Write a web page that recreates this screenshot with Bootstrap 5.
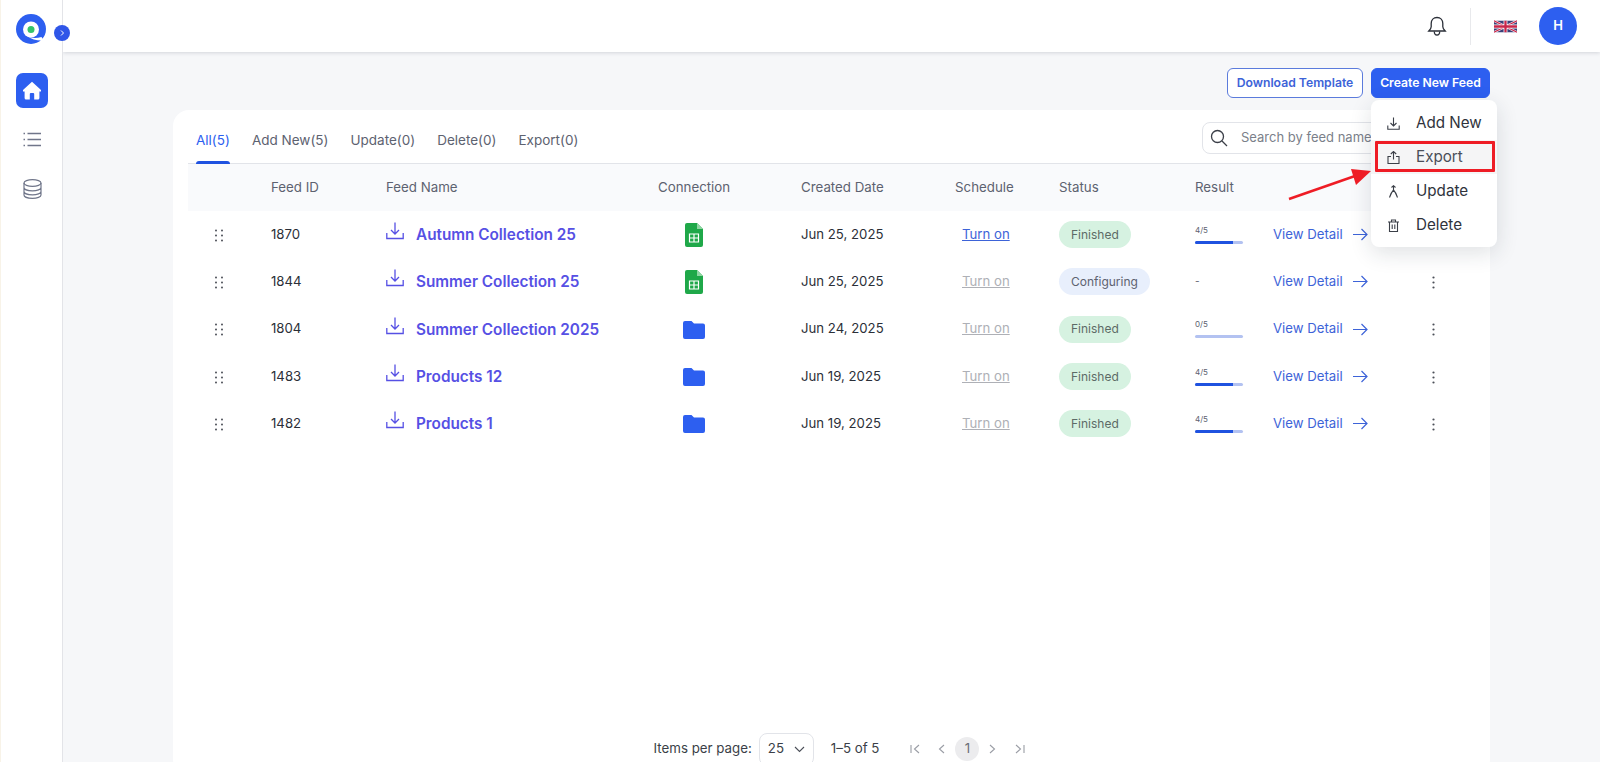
<!DOCTYPE html>
<html lang="en">
<head>
<meta charset="utf-8">
<title>Feeds</title>
<link rel="stylesheet" href="https://cdn.jsdelivr.net/npm/bootstrap@5.3.0/dist/css/bootstrap.min.css">
<style>
html,body{height:100%}
body{font-family:Inter,"Liberation Sans",sans-serif;font-size:13px;color:#2b2f38;background:#f6f7f9;overflow:hidden}
.shell{height:100vh}
.side{width:63px;flex:none;background:#fff;border-right:1px solid #e3e4e8;border-left:1px solid #f8f3e8;position:relative;z-index:5;padding-left:15px}
.logo-wrap{height:30px;margin-top:14px}
.toggle{position:absolute;left:53px;top:25px;width:16px;height:16px;border-radius:50%;background:#2f56e8;display:flex;align-items:center;justify-content:center}
.home-btn{width:32px;height:35px;border-radius:7px;background:#2d5ff0;margin-top:29px;display:flex;align-items:center;justify-content:center}
.side-ic{width:32px;display:flex;justify-content:center}
.side-list{margin-top:24px}
.side-db{margin-top:32px}
.topbar{height:52px;flex:none;background:#fff;box-shadow:0 1px 4px rgba(30,40,60,.16);position:relative;z-index:2}
.top-div{width:1px;height:37px;background:#e8e9ec;margin:0 23px 0 23px}
.ava{width:38px;height:38px;border-radius:50%;background:#2d5ff0;color:#fff;font-weight:600;font-size:13px;display:flex;align-items:center;justify-content:center;margin:0 23px 0 22px}
.content{min-height:0;padding:16px 110px 0 110px;position:relative}
.act-btn{font-size:12.2px;font-weight:600;height:30px;padding:0;border-radius:6px;display:flex;align-items:center;white-space:nowrap}
.btn-tpl{color:#3d63d8;border:1px solid #5b7bdc;background:#fff;width:136px;justify-content:center}
.btn-new{color:#fff;background:#2d5ff0;border:1px solid #2d5ff0;width:119px;justify-content:center}
.panel{background:#fff;border-radius:16px;margin-top:12px;flex:1;min-height:0;padding:0 15px;margin-bottom:-13px}
.tabbar{height:54px;border-bottom:1px solid #e2e4e9;position:relative;flex:none}
.tabitem{color:#5d6270;font-size:13.5px;padding-top:20px;height:54px;white-space:nowrap}
.tabitem.on{color:#2d5ff0;position:relative;margin-left:8px}
.tabitem.on::after{content:"";position:absolute;left:0;right:0;bottom:0;height:3px;background:#1f52e0;border-radius:3px 3px 0 0}
.tab-gap{margin-left:22px}
.searchbox{position:absolute;left:1014px;top:12px;width:285px;height:32px;border:1px solid #e2e4e9;border-radius:8px;display:flex;align-items:center;padding-left:7px;color:#7b7f8a;font-size:13px;gap:13px}
.feed-tbl{table-layout:fixed;width:100%;margin:0;--bs-table-bg:transparent}
.feed-tbl th{background:#f9fafc;color:#5d6270;font-weight:400;font-size:13.3px;height:47px;padding:0;border:0;vertical-align:middle}
.feed-tbl td{height:47.3px;padding:0;border:0;vertical-align:middle;font-size:13.2px;color:#2b2f38}
.c1{width:83px}.c2{width:115px}.c3{width:272px}.c4{width:143px}.c5{width:154px}.c6{width:104px}.c7{width:136px}.c8{width:77px}.c9{width:160px}
.feed-tbl td.dots{padding-left:27px}
.feed-link{color:#5650e4;font-weight:600;font-size:15.3px;text-decoration:none;display:flex;align-items:center;gap:12px;white-space:nowrap;padding-top:2px}
.feed-link svg{margin-top:-9px}
.feed-tbl td.conn{padding-left:27px}
.feed-tbl td.conn-f{padding-left:25px}
.feed-tbl td.sched{padding-left:7px}
.sched a{color:#3d63d8;text-decoration:underline}
.sched a.off{color:#aeb0b6}
.st-pill{font-size:12px;font-weight:400;padding:0 12px;height:27px;display:inline-flex;align-items:center;border-radius:14px;color:#5d6b66}
.st-done{background:#d6f2e1}
.st-conf{background:#e8effc;color:#5d6270}
.res-num{font-size:8px;line-height:9px;color:#5d6270;margin-bottom:6px}
.res-none{font-size:10px;line-height:9px;color:#5d6270}
.res-bar{width:48px;height:3px;background:#b3c2f1;border-radius:2px;--bs-progress-bar-bg:#1f52e0}
.view-l{color:#3d63d8;text-decoration:none;display:flex;align-items:center;gap:10px;white-space:nowrap;padding-left:1px}
.pager{height:52px;flex:none;color:#3b3f48;font-size:13.3px;gap:7px;margin-top:auto;padding-left:24px}
.per{width:55px;height:33px;border:1px solid #e2e4e9;border-radius:8px;display:flex;align-items:center;justify-content:space-between;padding:0 8px;margin-right:10px}
.pg-range{margin-right:15px}
.pg-ic{width:27px;display:flex;justify-content:center}
.pg-cur{width:24px;height:24px;border-radius:50%;background:#ececee;display:flex;align-items:center;justify-content:center;color:#6b6f78}
.menu-pop{position:absolute;display:block;left:1308px;top:48px;width:126px;height:147px;border:0;border-radius:8px;box-shadow:0 6px 22px rgba(30,40,60,.14);padding:6px 0;min-width:0;background:#fff;z-index:3}
.menu-pop .dropdown-item{display:flex;align-items:center;height:34px;padding:0 0 0 16px;font-size:15.2px;color:#2f333c;gap:16px}
.menu-pop .m-on{background:#f5f5f6;color:#4a4e58}
.mark-box{position:absolute;left:1312px;top:89px;width:120px;height:31px;border:3px solid #ee1c25;border-radius:1px;z-index:4}
.mark-arrow{position:absolute;left:1224px;top:113px;z-index:4}
</style>
</head>
<body>
<div class="shell d-flex">
  <aside class="side">
    <div class="logo-wrap">
      <svg width="30" height="30" viewBox="0 0 30 30"><circle cx="15" cy="15" r="15" fill="#2d5ff0"/><circle cx="15" cy="15.500" r="8" fill="#fff"/><path d="M11 21.500C15 24.500 20 24.500 25.500 23L27.500 26.500C22 27 16 26 11 21.500z" fill="#fff"/><circle cx="15" cy="15.500" r="3.500" fill="#34c46a"/></svg>
    </div>
    <div class="toggle"><svg width="8" height="8" viewBox="0 0 8 8"><path d="M3 1.500 5.500 4 3 6.500" fill="none" stroke="#fff" stroke-width="1"/></svg></div>
    <div class="home-btn"><svg width="20" height="19" viewBox="0 0 20 19"><path d="M10 .8 19 9v1.500h-1.600V17a1.500 1.500 0 0 1-1.500 1.500h-3.700V13a1 1 0 0 0-1-1H8.800a1 1 0 0 0-1 1v5.500H4.100A1.500 1.500 0 0 1 2.600 17v-6.500H1V9z" fill="#fff"/></svg></div>
    <div class="side-ic side-list"><svg width="19" height="15" viewBox="0 0 19 15" fill="none" stroke="#70768a" stroke-width="1.300"><path d="M4.500 1.500H18M4.500 7.500H18M4.500 13.500H18"/><path d="M.5 1.500h1.500M.5 7.500h1.500M.5 13.500h1.500" stroke-width="1.600"/></svg></div>
    <div class="side-ic side-db"><svg width="19" height="20" viewBox="0 0 19 20" fill="none" stroke="#70768a" stroke-width="1.200"><ellipse cx="9.500" cy="4" rx="8.500" ry="3.300"/><path d="M1 4v12c0 1.900 3.800 3.300 8.500 3.300S18 17.900 18 16V4M1 8.500c0 1.900 3.800 3.300 8.500 3.300S18 10.400 18 8.500M1 12.500c0 1.900 3.800 3.300 8.500 3.300s8.500-1.400 8.500-3.300"/></svg></div>
  </aside>
  <div class="flex-grow-1 d-flex flex-column" style="min-width:0">
    <header class="topbar d-flex align-items-center justify-content-end">
      <svg width="20" height="21" viewBox="0 0 20 21" fill="none" stroke="#2b2f38" stroke-width="1.300"><path d="M10 1.500c-3.500 0-5.800 2.600-5.800 6v3.200c0 1.500-1.200 3-2.400 4.300h16.400c-1.200-1.300-2.400-2.800-2.400-4.300V7.500c0-3.400-2.300-6-5.800-6z"/><path d="M7.300 15.500c0 2 1.200 3.500 2.700 3.500s2.700-1.500 2.700-3.500"/></svg>
      <div class="top-div"></div>
      <svg width="23" height="13" viewBox="0 0 60 30"><rect width="60" height="30" fill="#3a3f78"/><path d="M0 0l60 30M60 0L0 30" stroke="#fff" stroke-width="6"/><path d="M0 0l60 30M60 0L0 30" stroke="#c8264a" stroke-width="3"/><path d="M30 0v30M0 15h60" stroke="#fff" stroke-width="10"/><path d="M30 0v30M0 15h60" stroke="#c8264a" stroke-width="6"/></svg>
      <div class="ava">H</div>
    </header>
    <main class="content flex-grow-1 d-flex flex-column">
      <div class="d-flex justify-content-end gap-2">
        <button class="btn act-btn btn-tpl" type="button">Download Template</button>
        <button class="btn act-btn btn-new" type="button">Create New Feed</button>
      </div>
      <section class="panel d-flex flex-column">
        <div class="tabbar d-flex">
          <div class="tabitem on">All(5)</div>
          <div class="tabitem tab-gap">Add New(5)</div>
          <div class="tabitem tab-gap">Update(0)</div>
          <div class="tabitem tab-gap">Delete(0)</div>
          <div class="tabitem tab-gap">Export(0)</div>
          <div class="searchbox">
            <svg width="18" height="18" viewBox="0 0 18 18" fill="none" stroke="#3b3f48" stroke-width="1.300"><circle cx="7.500" cy="7.500" r="6"/><path d="m12 12 5 5"/></svg>
            <span>Search by feed name</span>
          </div>
        </div>
        <table class="table feed-tbl">
          <thead>
            <tr><th class="c1"></th><th class="c2">Feed ID</th><th class="c3">Feed Name</th><th class="c4">Connection</th><th class="c5">Created Date</th><th class="c6">Schedule</th><th class="c7">Status</th><th class="c8">Result</th><th class="c9"></th><th></th></tr>
          </thead>
          <tbody>
            <tr>
              <td class="dots"><svg width="8" height="13" viewBox="0 0 8 13" fill="#3b3f48"><circle cx="1" cy="1.500" r=".9"/><circle cx="7" cy="1.500" r=".9"/><circle cx="1" cy="6.500" r=".9"/><circle cx="7" cy="6.500" r=".9"/><circle cx="1" cy="11.500" r=".9"/><circle cx="7" cy="11.500" r=".9"/></svg></td>
              <td>1870</td>
              <td><a class="feed-link" href="#"><svg width="18" height="18" viewBox="0 0 18 18" fill="none" stroke="#5650e4" stroke-width="1.300"><path d="M9 .5v11M5 8l4 4 4-4M.8 11v5.500h16.400V11"/></svg>Autumn Collection 25</a></td>
              <td class="conn"><svg width="18" height="24" viewBox="0 0 18 24"><path d="M2 0h10l6 6v16a2 2 0 0 1-2 2H2a2 2 0 0 1-2-2V2a2 2 0 0 1 2-2z" fill="#1fa849"/><path d="M12 0l6 6h-6z" fill="#8ed6a2"/><path d="M4.500 11h9v8h-9z" fill="none" stroke="#fff" stroke-width="1.200"/><path d="M4.500 15h9M9 11v8" stroke="#fff" stroke-width="1.200"/></svg></td>
              <td>Jun 25, 2025</td>
              <td class="sched"><a href="#">Turn on</a></td>
              <td><span class="badge st-pill st-done">Finished</span></td>
              <td><div class="res-num">4/5</div><div class="progress res-bar"><div class="progress-bar" style="width:80%"></div></div></td>
              <td><a class="view-l" href="#">View Detail <svg width="15" height="13" viewBox="0 0 15 13" fill="none" stroke="#3d63d8" stroke-width="1.200"><path d="M0 6.500h14M8.500 1l5.500 5.500L8.500 12"/></svg></a></td>
              <td><svg width="3" height="13" viewBox="0 0 3 13" fill="#4b4f58"><circle cx="1.500" cy="1.500" r="1.100"/><circle cx="1.500" cy="6.500" r="1.100"/><circle cx="1.500" cy="11.500" r="1.100"/></svg></td>
            </tr>
            <tr>
              <td class="dots"><svg width="8" height="13" viewBox="0 0 8 13" fill="#3b3f48"><circle cx="1" cy="1.500" r=".9"/><circle cx="7" cy="1.500" r=".9"/><circle cx="1" cy="6.500" r=".9"/><circle cx="7" cy="6.500" r=".9"/><circle cx="1" cy="11.500" r=".9"/><circle cx="7" cy="11.500" r=".9"/></svg></td>
              <td>1844</td>
              <td><a class="feed-link" href="#"><svg width="18" height="18" viewBox="0 0 18 18" fill="none" stroke="#5650e4" stroke-width="1.300"><path d="M9 .5v11M5 8l4 4 4-4M.8 11v5.500h16.400V11"/></svg>Summer Collection 25</a></td>
              <td class="conn"><svg width="18" height="24" viewBox="0 0 18 24"><path d="M2 0h10l6 6v16a2 2 0 0 1-2 2H2a2 2 0 0 1-2-2V2a2 2 0 0 1 2-2z" fill="#1fa849"/><path d="M12 0l6 6h-6z" fill="#8ed6a2"/><path d="M4.500 11h9v8h-9z" fill="none" stroke="#fff" stroke-width="1.200"/><path d="M4.500 15h9M9 11v8" stroke="#fff" stroke-width="1.200"/></svg></td>
              <td>Jun 25, 2025</td>
              <td class="sched"><a class="off" href="#">Turn on</a></td>
              <td><span class="badge st-pill st-conf">Configuring</span></td>
              <td><div class="res-none">-</div></td>
              <td><a class="view-l" href="#">View Detail <svg width="15" height="13" viewBox="0 0 15 13" fill="none" stroke="#3d63d8" stroke-width="1.200"><path d="M0 6.500h14M8.500 1l5.500 5.500L8.500 12"/></svg></a></td>
              <td><svg width="3" height="13" viewBox="0 0 3 13" fill="#4b4f58"><circle cx="1.500" cy="1.500" r="1.100"/><circle cx="1.500" cy="6.500" r="1.100"/><circle cx="1.500" cy="11.500" r="1.100"/></svg></td>
            </tr>
            <tr>
              <td class="dots"><svg width="8" height="13" viewBox="0 0 8 13" fill="#3b3f48"><circle cx="1" cy="1.500" r=".9"/><circle cx="7" cy="1.500" r=".9"/><circle cx="1" cy="6.500" r=".9"/><circle cx="7" cy="6.500" r=".9"/><circle cx="1" cy="11.500" r=".9"/><circle cx="7" cy="11.500" r=".9"/></svg></td>
              <td>1804</td>
              <td><a class="feed-link" href="#"><svg width="18" height="18" viewBox="0 0 18 18" fill="none" stroke="#5650e4" stroke-width="1.300"><path d="M9 .5v11M5 8l4 4 4-4M.8 11v5.500h16.400V11"/></svg>Summer Collection 2025</a></td>
              <td class="conn-f"><svg width="22" height="18" viewBox="0 0 22 18"><path d="M2 0h6.500l2.500 2.500h9a2 2 0 0 1 2 2V16a2 2 0 0 1-2 2H2a2 2 0 0 1-2-2V2a2 2 0 0 1 2-2z" fill="#2d5ff0"/></svg></td>
              <td>Jun 24, 2025</td>
              <td class="sched"><a class="off" href="#">Turn on</a></td>
              <td><span class="badge st-pill st-done">Finished</span></td>
              <td><div class="res-num">0/5</div><div class="progress res-bar"><div class="progress-bar" style="width:0%"></div></div></td>
              <td><a class="view-l" href="#">View Detail <svg width="15" height="13" viewBox="0 0 15 13" fill="none" stroke="#3d63d8" stroke-width="1.200"><path d="M0 6.500h14M8.500 1l5.500 5.500L8.500 12"/></svg></a></td>
              <td><svg width="3" height="13" viewBox="0 0 3 13" fill="#4b4f58"><circle cx="1.500" cy="1.500" r="1.100"/><circle cx="1.500" cy="6.500" r="1.100"/><circle cx="1.500" cy="11.500" r="1.100"/></svg></td>
            </tr>
            <tr>
              <td class="dots"><svg width="8" height="13" viewBox="0 0 8 13" fill="#3b3f48"><circle cx="1" cy="1.500" r=".9"/><circle cx="7" cy="1.500" r=".9"/><circle cx="1" cy="6.500" r=".9"/><circle cx="7" cy="6.500" r=".9"/><circle cx="1" cy="11.500" r=".9"/><circle cx="7" cy="11.500" r=".9"/></svg></td>
              <td>1483</td>
              <td><a class="feed-link" href="#"><svg width="18" height="18" viewBox="0 0 18 18" fill="none" stroke="#5650e4" stroke-width="1.300"><path d="M9 .5v11M5 8l4 4 4-4M.8 11v5.500h16.400V11"/></svg>Products 12</a></td>
              <td class="conn-f"><svg width="22" height="18" viewBox="0 0 22 18"><path d="M2 0h6.500l2.500 2.500h9a2 2 0 0 1 2 2V16a2 2 0 0 1-2 2H2a2 2 0 0 1-2-2V2a2 2 0 0 1 2-2z" fill="#2d5ff0"/></svg></td>
              <td>Jun 19, 2025</td>
              <td class="sched"><a class="off" href="#">Turn on</a></td>
              <td><span class="badge st-pill st-done">Finished</span></td>
              <td><div class="res-num">4/5</div><div class="progress res-bar"><div class="progress-bar" style="width:80%"></div></div></td>
              <td><a class="view-l" href="#">View Detail <svg width="15" height="13" viewBox="0 0 15 13" fill="none" stroke="#3d63d8" stroke-width="1.200"><path d="M0 6.500h14M8.500 1l5.500 5.500L8.500 12"/></svg></a></td>
              <td><svg width="3" height="13" viewBox="0 0 3 13" fill="#4b4f58"><circle cx="1.500" cy="1.500" r="1.100"/><circle cx="1.500" cy="6.500" r="1.100"/><circle cx="1.500" cy="11.500" r="1.100"/></svg></td>
            </tr>
            <tr>
              <td class="dots"><svg width="8" height="13" viewBox="0 0 8 13" fill="#3b3f48"><circle cx="1" cy="1.500" r=".9"/><circle cx="7" cy="1.500" r=".9"/><circle cx="1" cy="6.500" r=".9"/><circle cx="7" cy="6.500" r=".9"/><circle cx="1" cy="11.500" r=".9"/><circle cx="7" cy="11.500" r=".9"/></svg></td>
              <td>1482</td>
              <td><a class="feed-link" href="#"><svg width="18" height="18" viewBox="0 0 18 18" fill="none" stroke="#5650e4" stroke-width="1.300"><path d="M9 .5v11M5 8l4 4 4-4M.8 11v5.500h16.400V11"/></svg>Products 1</a></td>
              <td class="conn-f"><svg width="22" height="18" viewBox="0 0 22 18"><path d="M2 0h6.500l2.500 2.500h9a2 2 0 0 1 2 2V16a2 2 0 0 1-2 2H2a2 2 0 0 1-2-2V2a2 2 0 0 1 2-2z" fill="#2d5ff0"/></svg></td>
              <td>Jun 19, 2025</td>
              <td class="sched"><a class="off" href="#">Turn on</a></td>
              <td><span class="badge st-pill st-done">Finished</span></td>
              <td><div class="res-num">4/5</div><div class="progress res-bar"><div class="progress-bar" style="width:80%"></div></div></td>
              <td><a class="view-l" href="#">View Detail <svg width="15" height="13" viewBox="0 0 15 13" fill="none" stroke="#3d63d8" stroke-width="1.200"><path d="M0 6.500h14M8.500 1l5.500 5.500L8.500 12"/></svg></a></td>
              <td><svg width="3" height="13" viewBox="0 0 3 13" fill="#4b4f58"><circle cx="1.500" cy="1.500" r="1.100"/><circle cx="1.500" cy="6.500" r="1.100"/><circle cx="1.500" cy="11.500" r="1.100"/></svg></td>
            </tr>
          </tbody>
        </table>
        <div class="pager d-flex align-items-center justify-content-center">
          <span>Items per page:</span>
          <div class="per"><span>25</span><svg width="11" height="7" viewBox="0 0 11 7" fill="none" stroke="#4b4f58" stroke-width="1.100"><path d="m1 1 4.500 4.500L10 1"/></svg></div>
          <span class="pg-range">1–5 of 5</span>
          <div class="d-flex align-items-center">
            <div class="pg-ic"><svg width="10" height="10" viewBox="0 0 10 10" fill="none" stroke="#9a9da5" stroke-width="1.100"><path d="M1 1v8M9 1 4.500 5 9 9"/></svg></div>
            <div class="pg-ic"><svg width="7" height="10" viewBox="0 0 7 10" fill="none" stroke="#9a9da5" stroke-width="1.100"><path d="M6 1 1.500 5 6 9"/></svg></div>
            <div class="pg-cur">1</div>
            <div class="pg-ic"><svg width="7" height="10" viewBox="0 0 7 10" fill="none" stroke="#9a9da5" stroke-width="1.100"><path d="m1 1 4.500 4L1 9"/></svg></div>
            <div class="pg-ic"><svg width="10" height="10" viewBox="0 0 10 10" fill="none" stroke="#9a9da5" stroke-width="1.100"><path d="M9 1v8M1 1l4.500 4L1 9"/></svg></div>
          </div>
        </div>
      </section>
      <ul class="dropdown-menu menu-pop list-unstyled m-0">
        <li><a class="dropdown-item" href="#"><svg width="13" height="13" viewBox="0 0 13 13" fill="none" stroke="#3b3f48" stroke-width="1.100"><path d="M6.500 .5v8M3.500 6l3 3 3-3M.8 8.500v3.800h11.400V8.500"/></svg><span>Add New</span></a></li>
        <li><a class="dropdown-item m-on" href="#"><svg width="13" height="13" viewBox="0 0 13 13" fill="none" stroke="#3b3f48" stroke-width="1.100"><path d="M6.500 8.500V.8M3.800 3l2.700-2.500L9.200 3M4 5.500H1v7h11v-7H9"/></svg><span>Export</span></a></li>
        <li><a class="dropdown-item" href="#"><svg width="13" height="13" viewBox="0 0 13 13" fill="none" stroke="#3b3f48" stroke-width="1.100"><path d="M6.500 5v-4M4.500 2.500 6.500.7l2 1.800M2.500 12.500c1-3 2.500-6 4-7.500 1.500 1.500 3 4.500 4 7.500"/></svg><span>Update</span></a></li>
        <li><a class="dropdown-item" href="#"><svg width="13" height="13" viewBox="0 0 13 13" fill="none" stroke="#3b3f48" stroke-width="1.100"><path d="M1 3h11M4.500 3V1h4v2M2.500 3v9.500h8V3M5.200 5.500v4.500M7.800 5.500v4.500"/></svg><span>Delete</span></a></li>
      </ul>
      <div class="mark-box"></div>
      <svg class="mark-arrow" width="86" height="36" viewBox="0 0 86 36"><path d="M2 34 68 11" stroke="#ee1c25" stroke-width="2.500"/><path d="M84 6 64 4l5 16z" fill="#ee1c25"/></svg>
    </main>
  </div>
</div>
<script src="https://cdn.jsdelivr.net/npm/bootstrap@5.3.0/dist/js/bootstrap.bundle.min.js"></script>
</body>
</html>
